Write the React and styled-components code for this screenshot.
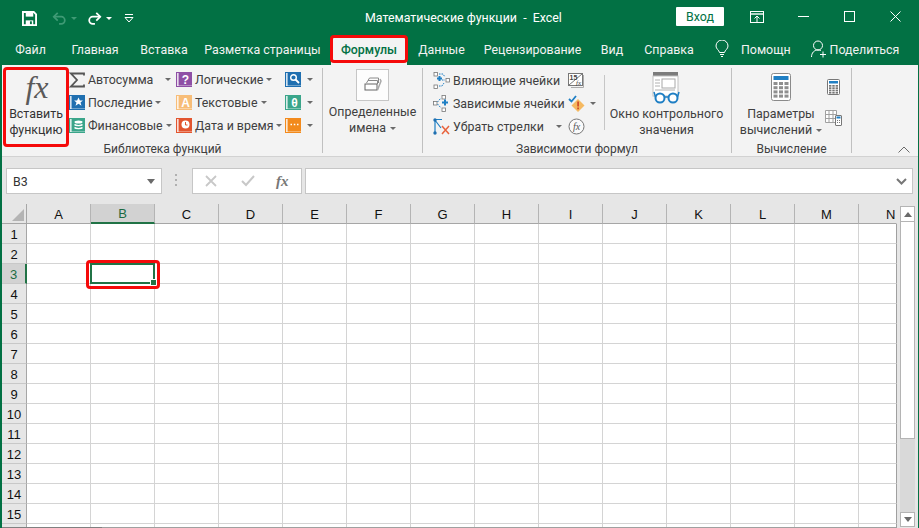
import React from 'react'
import styled, { createGlobalStyle } from 'styled-components'

const Global = createGlobalStyle`
  html, body { margin: 0; padding: 0; height: 100%; overflow: hidden; }
  body { font-family: Roboto, "Noto Sans", sans-serif; font-size: 12.4px; color: #404040; }
  svg { display: block; flex: none; }
`

const green = '#217346'
const dark = '#027144'

const Page = styled.div`
  width: 919px;
  height: 528px;
  display: flex;
  flex-direction: column;
  background: ${dark};
  overflow: hidden;
`
const TitleBar = styled.div`
  height: 36px;
  display: flex;
  align-items: center;
  color: #fff;
  flex: none;
`
const Qat = styled.div`
  width: 365px;
  padding-left: 22px;
  box-sizing: border-box;
  display: flex;
  align-items: center;
`
const QatGap = styled.span`
  width: 15px;
`
const Title = styled.div`
  width: 188px;
  margin-top: -2px;
  white-space: pre;
`
const Login = styled.div`
  margin-left: 123px;
  width: 48px;
  height: 19px;
  margin-top: -3px;
  background: #fff;
  color: ${dark};
  display: flex;
  align-items: center;
  justify-content: center;
  border-radius: 1px;
`
const WinButtons = styled.div`
  display: flex;
  align-items: center;
  margin-top: -3px;
  margin-left: 26px;
`
const WinButton = styled.div`
  width: ${p => p.$w}px;
  display: flex;
`
const TabRow = styled.div`
  height: 29px;
  display: flex;
  padding-left: 4px;
  flex: none;
`
const Tab = styled.div`
  position: relative;
  width: ${p => p.$w}px;
  margin-left: ${p => p.$ml || 0}px;
  display: flex;
  align-items: center;
  justify-content: center;
  padding-bottom: 3px;
  box-sizing: border-box;
  white-space: nowrap;
  color: ${p => (p.$active ? dark : '#f2f2f2')};
  background: ${p => (p.$active ? '#f3f3f3' : 'transparent')};
  font-weight: ${p => (p.$active ? 500 : 400)};
`
const RedBox = styled.div`
  position: absolute;
  left: ${p => p.$l}px;
  top: ${p => p.$t}px;
  width: ${p => p.$w}px;
  height: ${p => p.$h}px;
  box-sizing: border-box;
  border: 3px solid #f50a0a;
  border-radius: 4px;
  z-index: 5;
  pointer-events: none;
`
const Help = styled.div`
  display: flex;
  align-items: center;
  color: #f2f2f2;
  padding-bottom: 3px;
  margin-left: ${p => p.$ml}px;
  gap: ${p => p.$gap}px;
`
const Body = styled.div`
  flex: 1;
  margin: 0 1px 0 2px;
  display: flex;
  flex-direction: column;
  background: #e6e6e6;
  min-height: 0;
`
const Ribbon = styled.div`
  height: 92px;
  flex: none;
  display: flex;
  box-sizing: border-box;
  padding: 3px 0 0 1px;
  background: #f3f3f3;
  border-bottom: 1px solid #d2d2d2;
`
const Group = styled.div`
  width: ${p => p.$w}px;
  flex: none;
  height: 85px;
  display: flex;
  flex-direction: column;
  box-sizing: border-box;
  border-right: 1px solid #c0c0c0;
`
const GroupBody = styled.div`
  flex: 1;
  display: flex;
  min-height: 0;
  padding-left: ${p => p.$pl || 0}px;
`
const GroupLabel = styled.div`
  height: 11px;
  line-height: 14px;
  text-align: center;
  font-size: 12px;
  white-space: nowrap;
`
const FxButton = styled.div`
  position: relative;
  width: 66px;
  display: flex;
  flex-direction: column;
  align-items: center;
  line-height: 16px;
  text-align: center;
  color: #333;
`
const FxGlyph = styled.div`
  font-family: "Liberation Serif", serif;
  font-style: italic;
  font-size: 32px;
  line-height: 38px;
  height: 38px;
  padding-left: 2px;
  color: #5a5a5a;
`
const SmallCol = styled.div`
  width: ${p => p.$w}px;
  flex: none;
  padding-top: ${p => p.$pt || 0}px;
  display: flex;
  flex-direction: column;
  align-items: ${p => (p.$center ? 'center' : 'stretch')};
`
const SmallRow = styled.div`
  height: 23px;
  display: flex;
  align-items: center;
  white-space: nowrap;
  padding-left: ${p => p.$pl || 0}px;
`
const RowLabel = styled.span`
  margin-left: ${p => p.$ml ?? 3}px;
  margin-right: 3px;
`
const Caret = styled.span`
  width: 0;
  height: 0;
  flex: none;
  margin-left: ${p => p.$ml || 0}px;
  border-left: 3px solid transparent;
  border-right: 3px solid transparent;
  border-top: 3px solid #6a6a6a;
`
const BigCol = styled.div`
  width: ${p => p.$w}px;
  flex: none;
  display: flex;
  flex-direction: column;
  align-items: center;
  line-height: 16px;
  text-align: center;
  white-space: nowrap;
`
const IconSlot = styled.div`
  height: ${p => p.$h}px;
  flex: none;
  padding-top: ${p => p.$pt || 0}px;
  box-sizing: border-box;
  display: flex;
  justify-content: center;
`
const NamesBox = styled.div`
  width: 31px;
  height: 30px;
  margin-top: 1px;
  background: #fdfdfd;
  border: 1px solid #c6c6c6;
  display: flex;
  align-items: center;
  justify-content: center;
`
const InlineText = styled.div`
  display: flex;
  align-items: center;
  gap: 4px;
`
const Divider = styled.div`
  width: 1px;
  height: 55px;
  margin-top: 7px;
  background: #c6c6c6;
  flex: none;
`
const CalcGap = styled.div`
  height: 15px;
  flex: none;
`
const Collapse = styled.div`
  flex: 1;
  display: flex;
  justify-content: flex-end;
  align-items: flex-end;
  padding: 0 8px 3px 0;
`
const FormulaBar = styled.div`
  height: 47px;
  flex: none;
  display: flex;
  align-items: flex-start;
  padding: 11px 0 0 4px;
  box-sizing: border-box;
`
const Field = styled.div`
  height: 26px;
  box-sizing: border-box;
  background: #fff;
  border: 1px solid #c6c6c6;
  display: flex;
  align-items: center;
  width: ${p => p.$w}px;
  margin-left: ${p => p.$ml || 0}px;
  padding: 0 ${p => p.$pr || 0}px 0 ${p => p.$pl || 0}px;
  justify-content: ${p => p.$justify || 'flex-start'};
`
const NameText = styled.span`
  flex: 1;
  color: #333;
`
const FxSmall = styled.span`
  font-family: "Liberation Serif", serif;
  font-style: italic;
  font-weight: 700;
  font-size: 15px;
  color: #777;
  margin-left: 21px;
`
const Grip = styled.div`
  margin: 6px 0 0 13px;
  width: 2px;
  height: 12px;
  background: repeating-linear-gradient(#b0b0b0 0 2px, transparent 2px 5px);
`
const Content = styled.div`
  flex: 1;
  display: flex;
  min-height: 0;
`
const SheetWrap = styled.div`
  width: 895px;
  flex: none;
  display: flex;
  flex-direction: column;
`
const Sheet = styled.div`
  flex: 1;
  min-height: 0;
  overflow: hidden;
  display: grid;
  grid-template-columns: 25px repeat(13, 64px) 38px;
  grid-auto-rows: 20px;
  background: #fff;
`
const Corner = styled.div`
  background: #e6e6e6;
  border-right: 1px solid #a6a6a6;
  border-bottom: 1px solid #a6a6a6;
  box-sizing: border-box;
  display: flex;
  align-items: flex-end;
  justify-content: flex-end;
  padding: 0 2px 2px 0;
`
const ColHead = styled.div`
  box-sizing: border-box;
  background: ${p => (p.$sel ? '#d2d2d2' : '#e6e6e6')};
  color: ${p => (p.$sel ? '#1c6b42' : '#111')};
  border-right: 1px solid ${p => (p.$last ? '#e6e6e6' : '#b4b4b4')};
  border-bottom: ${p => (p.$sel ? `2px solid ${green}` : '1px solid #a6a6a6')};
  font-family: "Liberation Sans", sans-serif;
  font-size: 13px;
  padding: 1px 0 0 ${p => (p.$last ? 27 : 0)}px;
  display: flex;
  align-items: center;
  justify-content: ${p => (p.$last ? 'flex-start' : 'center')};
`
const RowHead = styled.div`
  box-sizing: border-box;
  background: ${p => (p.$sel ? '#d2d2d2' : '#e6e6e6')};
  color: ${p => (p.$sel ? '#1c6b42' : '#111')};
  border-right: ${p => (p.$sel ? `2px solid ${green}` : '1px solid #a6a6a6')};
  border-bottom: 1px solid #c8c8c8;
  font-family: "Liberation Sans", sans-serif;
  font-size: 13px;
  padding-top: 1px;
  display: flex;
  align-items: center;
  justify-content: center;
`
const Cell = styled.div`
  position: relative;
  box-sizing: border-box;
  border-right: 1px solid ${p => (p.$last ? '#a0a0a0' : '#d4d4d4')};
  border-bottom: 1px solid #d4d4d4;
`
const Selection = styled.div`
  position: absolute;
  left: -1px;
  top: -1px;
  width: 65px;
  height: 21px;
  box-sizing: border-box;
  border: 2px solid ${green};
  z-index: 3;
`
const Handle = styled.div`
  position: absolute;
  right: -4px;
  bottom: -4px;
  width: 5px;
  height: 5px;
  background: ${green};
  border: 1px solid #fff;
`
const HScroll = styled.div`
  height: 1px;
  flex: none;
  background: #a0a0a0;
`
const HScrollDark = styled.div`
  width: 100px;
  height: 1px;
  background: #808080;
`
const VScroll = styled.div`
  flex: 1;
  display: flex;
  flex-direction: column;
  padding: 2px 3px 1px 3px;
  background: #e6e6e6;
`
const ScrollBtn = styled.div`
  height: ${p => p.$h}px;
  flex: none;
  box-sizing: border-box;
  background: #fff;
  border: 1px solid #b4b4b4;
  display: flex;
  align-items: center;
  justify-content: center;
`
const Thumb = styled.div`
  height: 217px;
  flex: none;
  box-sizing: border-box;
  background: #fff;
  border: 1px solid #b4b4b4;
  border-top: none;
`
const Track = styled.div`
  flex: 1;
  background: #d9d9d9;
`

const Book = ({ color, children }) => (
  <svg width="16" height="17" viewBox="0 0 16 17">
    <rect x="0" y="1" width="16" height="15" fill={color} />
    <rect x="1.2" y="2" width="1.3" height="13" fill="#fff" />
    <rect x="1.2" y="14" width="14.8" height="1" fill="#fff" opacity="0.35" />
    {children}
  </svg>
)

const BookText = ({ children }) => (
  <text x="9.5" y="12.5" fontSize="12" fontWeight="700" textAnchor="middle" fill="#fff" fontFamily="Liberation Sans, sans-serif">
    {children}
  </text>
)

const Sigma = () => (
  <svg width="16" height="16" viewBox="0 0 16 16">
    <path d="M15 3.500V1.500H2L8 8 2 14.500h13v-2" fill="none" stroke="#555" strokeWidth="1.800" />
  </svg>
)

const SaveIcon = () => (
  <svg width="15" height="15" viewBox="0 0 16 16">
    <path d="M1 1h11.500L15 3.500V15H1z" fill="none" stroke="#fff" strokeWidth="2" />
    <rect x="4" y="1" width="8" height="5" fill="#fff" />
    <rect x="4" y="10" width="8" height="5" fill="#fff" />
    <rect x="8.500" y="11" width="2" height="3" fill={dark} />
  </svg>
)

const UndoIcon = ({ color, flip }) => (
  <svg width="15" height="13" viewBox="0 0 17 14" style={flip ? { transform: 'scaleX(-1)' } : undefined}>
    <path d="M2 5h8.500a4 4 0 0 1 0 8H8" fill="none" stroke={color} strokeWidth="2" />
    <path d="M6.500 .5 2 5l4.500 4.500" fill="none" stroke={color} strokeWidth="2" />
  </svg>
)

const QatCaret = styled.span`
  width: 0;
  height: 0;
  margin: 0 ${p => p.$mr}px 0 ${p => p.$ml}px;
  border-left: 3px solid transparent;
  border-right: 3px solid transparent;
  border-top: 3px solid ${p => p.$color};
`

const Customize = () => (
  <svg width="10" height="9" viewBox="0 0 10 9">
    <path d="M1 .5h8" stroke="#fff" />
    <path d="M1 3.500h8L5 8z" fill="none" stroke="#fff" />
  </svg>
)

const RibbonDisplay = () => (
  <svg width="14" height="12" viewBox="0 0 14 12">
    <rect x=".5" y=".5" width="13" height="11" fill="none" stroke="#fff" />
    <path d="M1 3h12" stroke="#fff" strokeWidth="1.400" />
    <path d="M7 11V5M4.500 7.500 7 5l2.500 2.500" fill="none" stroke="#fff" />
  </svg>
)

const Minimize = () => (
  <svg width="11" height="11" viewBox="0 0 11 11"><path d="M0 5.500h11" stroke="#fff" /></svg>
)
const Maximize = () => (
  <svg width="11" height="11" viewBox="0 0 11 11"><rect x=".5" y=".5" width="10" height="10" fill="none" stroke="#fff" /></svg>
)
const CloseIcon = () => (
  <svg width="11" height="11" viewBox="0 0 11 11"><path d="M.5.5l10 10M10.500.5l-10 10" stroke="#fff" /></svg>
)

const Bulb = () => (
  <svg width="14" height="18" viewBox="0 0 14 18">
    <path d="M4.500 12.500C4 10 1 9 1 6a6 6 0 0 1 12 0c0 3-3 4-3.500 6.500z" fill="none" stroke="#fff" />
    <path d="M5 14.500h4M6 16.500h2" stroke="#fff" />
  </svg>
)

const ShareUser = () => (
  <svg width="16" height="18" viewBox="0 0 16 18">
    <circle cx="7" cy="5.500" r="4.500" fill="none" stroke="#fff" />
    <path d="M.5 17c0-4 2.500-7 6.500-7 1 0 2 .2 2.800 .6" fill="none" stroke="#fff" />
    <path d="M12 11.500v6M9 14.500h6" stroke="#fff" />
  </svg>
)

const NamesIcon = () => (
  <svg width="18" height="18" viewBox="0 0 18 18">
    <path d="M4 4.500 5.500 2h9v5" fill="none" stroke="#8a8a8a" />
    <path d="M2.500 7 4 4.500h9.500V8" fill="none" stroke="#8a8a8a" />
    <rect x="1" y="8" width="12" height="6" fill="#fff" stroke="#666" />
    <path d="M13.500 14 17 5l-1-2" fill="none" stroke="#a9a9a9" strokeWidth="1.500" />
  </svg>
)

const Sq = ({ x, y }) => <rect x={x} y={y} width="3.500" height="3.500" fill="#fff" stroke="#777" strokeWidth=".8" />

const Precedents = () => (
  <svg width="17" height="17" viewBox="0 0 17 17">
    <Sq x="1" y=".5" /><Sq x="13" y="6.500" /><Sq x="1" y="13" />
    <path d="M4 6.500h5M6.500 4v5" stroke="#1f7fc4" strokeWidth="2" />
    <path d="M6 2h4l2 3M9 8h3" fill="none" stroke="#1f7fc4" strokeDasharray="1.500 1" />
    <path d="M6 14h3l2-3" fill="none" stroke="#1f7fc4" strokeDasharray="1.500 1" />
  </svg>
)

const Dependents = () => (
  <svg width="17" height="17" viewBox="0 0 17 17">
    <Sq x=".5" y="6.500" /><Sq x="9" y=".5" /><Sq x="9" y="13" />
    <path d="M9 7.500h6M12 4.500v6" stroke="#1f7fc4" strokeWidth="2" />
    <path d="M4.500 7 8 3M4.500 9 8 13" fill="none" stroke="#1f7fc4" strokeDasharray="1.500 1" />
  </svg>
)

const RemoveArrows = () => (
  <svg width="17" height="17" viewBox="0 0 17 17">
    <path d="M1.500 1.500 9 1.500M1.500 1.500 8 10M2 2v13" fill="none" stroke="#1f7fc4" strokeWidth="1.200" />
    <circle cx="2" cy="2" r="1.700" fill="#1f6fb0" />
    <circle cx="2" cy="15" r="1.700" fill="#1f6fb0" />
    <path d="M9 8l7 8M16 8l-7 8" stroke="#e8623c" strokeWidth="1.500" />
  </svg>
)

const ShowFormulas = () => (
  <svg width="17" height="17" viewBox="0 0 17 17">
    <rect x=".5" y="1.500" width="14" height="12" fill="#fff" stroke="#777" />
    <path d="M1 13 14 2" stroke="#777" />
    <text x="1.500" y="8" fontSize="7" fontWeight="700" fill="#444" fontFamily="Liberation Sans, sans-serif">15</text>
    <text x="8" y="13" fontSize="7" fontStyle="italic" fill="#444" fontFamily="Liberation Serif, serif">fx</text>
    <path d="M15.500 3v12.500H3" fill="none" stroke="#aaa" />
  </svg>
)

const ErrorCheck = () => (
  <svg width="17" height="17" viewBox="0 0 17 17">
    <path d="M1 4l2.500 2.500L8 1" fill="none" stroke="#1f7fc4" strokeWidth="1.800" />
    <path d="M10 4l6.500 6.500L10 17l-6.500-6.500z" fill="#f5b961" />
    <rect x="9.200" y="6.500" width="1.800" height="5" fill="#d2502a" />
    <rect x="9.200" y="12.500" width="1.800" height="1.800" fill="#d2502a" />
  </svg>
)

const Evaluate = () => (
  <svg width="17" height="17" viewBox="0 0 17 17">
    <circle cx="8.500" cy="8.500" r="7.500" fill="#fafafa" stroke="#777" />
    <text x="8.500" y="12" fontSize="10" fontStyle="italic" textAnchor="middle" fill="#555" fontFamily="Liberation Serif, serif">fx</text>
  </svg>
)

const WatchIcon = () => (
  <svg width="30" height="32" viewBox="0 0 30 32">
    <rect x="1" y="0" width="25" height="4" fill="#7b7b7b" />
    <rect x="1" y="4" width="25" height="20" fill="#fff" stroke="#c0c0c0" />
    <rect x="10" y="7" width="13" height="9" fill="#fff" stroke="#a8a8a8" />
    <path d="M3 8h5M3 11h5M3 14h5M3 18h20" stroke="#b0b0b0" />
    <circle cx="8" cy="26" r="4.500" fill="#fff" stroke="#1f7fc4" strokeWidth="2" />
    <circle cx="21" cy="26" r="4.500" fill="#fff" stroke="#1f7fc4" strokeWidth="2" />
    <path d="M12.500 25h4M3.500 25 2 20M25.500 25 27 20" fill="none" stroke="#1f7fc4" strokeWidth="1.500" />
  </svg>
)

const CalcKeys = ({ x, y, w, h, n, step, gap, fill }) => {
  const keys = []
  for (let r = 0; r < n; r++) {
    for (let c = 0; c < 3; c++) {
      keys.push(<rect key={`${r}-${c}`} x={x + c * step} y={y + r * gap} width={w} height={h} fill={fill} />)
    }
  }
  return keys
}

const CalcBig = () => (
  <svg width="20" height="28" viewBox="0 0 20 28">
    <rect x=".5" y=".5" width="19" height="27" rx="2" fill="#fff" stroke="#8a8a8a" />
    <rect x="2.500" y="3" width="15" height="4" fill="#1f7fc4" />
    <CalcKeys x={2.5} y={9} w={4} h={3} n={4} step={5.5} gap={4.2} fill="#8f8f8f" />
  </svg>
)

const CalcSmall = () => (
  <svg width="13" height="16" viewBox="0 0 13 16">
    <rect x=".5" y=".5" width="12" height="15" rx="1" fill="#fff" stroke="#777" />
    <rect x="2" y="2" width="9" height="2.500" fill="#1f7fc4" />
    <CalcKeys x={2} y={6} w={2.4} h={1.7} n={4} step={3.3} gap={2.3} fill="#777" />
  </svg>
)

const CalcSheet = () => (
  <svg width="17" height="16" viewBox="0 0 17 16">
    <path d="M.5 .5h11v12H.5zM.5 4.500h11M.5 8.500h11M4 .5v12M8 .5v12" fill="#fff" stroke="#a0a0a0" />
    <rect x="10.500" y="5.500" width="6" height="10" rx=".5" fill="#fff" stroke="#777" />
    <rect x="11.500" y="6.500" width="4" height="2" fill="#1f7fc4" />
    <path d="M12 10.500h1M14 10.500h1M12 12.500h1M14 12.500h1" stroke="#777" />
  </svg>
)

const Chevron = () => (
  <svg width="12" height="7" viewBox="0 0 12 7">
    <path d="M.5 6.500 6 1l5.500 5.500" fill="none" stroke="#6a6a6a" />
  </svg>
)

const XMark = () => (
  <svg width="12" height="12" viewBox="0 0 12 12"><path d="M1 1l10 10M11 1 1 11" stroke="#c8c8c8" strokeWidth="1.800" /></svg>
)
const Check = () => (
  <svg width="14" height="12" viewBox="0 0 14 12" style={{ marginLeft: 24 }}><path d="M1 6l4 4 8-9" fill="none" stroke="#c8c8c8" strokeWidth="2" /></svg>
)
const DownChevron = () => (
  <svg width="11" height="7" viewBox="0 0 11 7"><path d="M1 1l4.500 4.500L10 1" fill="none" stroke="#777" strokeWidth="2" /></svg>
)
const CornerMark = () => (
  <svg width="12" height="12" viewBox="0 0 12 12"><path d="M12 0v12H0z" fill="#b4b4b4" /></svg>
)
const ScrollArrow = ({ down }) => (
  <svg width="8" height="5" viewBox="0 0 8 5">
    <path d={down ? 'M0 0h8L4 5z' : 'M0 5h8L4 0z'} fill="#6a6a6a" />
  </svg>
)

const tabs = [
  ['Файл', 53], ['Главная', 76], ['Вставка', 62], ['Разметка страницы', 135],
]
const tabsAfter = [
  ['Данные', 69], ['Рецензирование', 113], ['Вид', 46], ['Справка', 68],
]

const libCol1 = [
  { label: 'Автосумма', icon: <Sigma />, gap: 9 },
  { label: 'Последние', icon: <Book color="#1f6fb0"><path d="M9.500 3.500l1.400 3h3l-2.400 2 1 3.200-3-1.900-3 1.900 1-3.200-2.400-2h3z" fill="#fff" /></Book> },
  { label: 'Финансовые', icon: <Book color="#3aa58a"><ellipse cx="9.500" cy="5" rx="4" ry="1.500" fill="#fff" /><path d="M5.500 7.500c1 1.500 7 1.500 8 0M5.500 10.500c1 1.500 7 1.500 8 0" stroke="#fff" strokeWidth="1.400" fill="none" /></Book> },
]
const libCol2 = [
  { label: 'Логические', icon: <Book color="#8e4fa5"><BookText>?</BookText></Book> },
  { label: 'Текстовые', icon: <Book color="#f7bd78"><BookText>A</BookText></Book> },
  { label: 'Дата и время', icon: <Book color="#e2552f"><circle cx="9.500" cy="7.500" r="4" fill="#fff" /><path d="M9.500 5v3h2" stroke="#e2552f" fill="none" /></Book> },
]
const libCol3 = [
  <Book color="#1f6fb0"><circle cx="8.500" cy="6.500" r="2.800" fill="none" stroke="#fff" strokeWidth="1.400" /><path d="M10.500 8.500l3.500 3.500" stroke="#fff" strokeWidth="1.800" /></Book>,
  <Book color="#3aa58a"><BookText>θ</BookText></Book>,
  <Book color="#f28a1c"><path d="M5.500 7.500h1.500M8.800 7.500h1.500M12 7.500h1.500" stroke="#fff" strokeWidth="1.500" /></Book>,
]

const columns = 'ABCDEFGHIJKLMN'.split('')
const rows = Array.from({ length: 16 }, (_, i) => i + 1)

export default function App() {
  return (
    <Page>
      <Global />
      <TitleBar>
        <Qat>
          <SaveIcon />
          <QatGap />
          <UndoIcon color="#3f9a75" />
          <QatCaret $ml={4} $mr={10} $color="#3f9a75" />
          <UndoIcon color="#fff" flip />
          <QatCaret $ml={4} $mr={12} $color="#fff" />
          <Customize />
        </Qat>
        <Title>Математические функции  -  Excel</Title>
        <Login>Вход</Login>
        <WinButtons>
          <WinButton $w={48}><RibbonDisplay /></WinButton>
          <WinButton $w={46}><Minimize /></WinButton>
          <WinButton $w={46}><Maximize /></WinButton>
          <WinButton $w={12}><CloseIcon /></WinButton>
        </WinButtons>
      </TitleBar>

      <TabRow>
        {tabs.map(([name, w]) => <Tab key={name} $w={w}>{name}</Tab>)}
        <Tab $w={76} $ml={1} $active>
          Формулы
          <RedBox $l={-1} $t={-1} $w={78} $h={28} />
        </Tab>
        {tabsAfter.map(([name, w]) => <Tab key={name} $w={w}>{name}</Tab>)}
        <Help $ml={12} $gap={12}><Bulb />Помощн</Help>
        <Help $ml={20} $gap={3}><ShareUser />Поделиться</Help>
      </TabRow>

      <Body>
        <Ribbon>
          <Group $w={320}>
            <GroupBody>
              <FxButton>
                <RedBox $l={0} $t={-1} $w={66} $h={80} />
                <FxGlyph>fx</FxGlyph>
                <div>Вставить</div>
                <div>функцию</div>
              </FxButton>
              <SmallCol $w={107}>
                {libCol1.map(r => (
                  <SmallRow key={r.label}>
                    {r.icon}
                    <RowLabel>{r.label}</RowLabel>
                    <Caret $ml={r.gap || 0} />
                  </SmallRow>
                ))}
              </SmallCol>
              <SmallCol $w={109}>
                {libCol2.map(r => (
                  <SmallRow key={r.label}>
                    {r.icon}
                    <RowLabel>{r.label}</RowLabel>
                    <Caret />
                  </SmallRow>
                ))}
              </SmallCol>
              <SmallCol $w={36}>
                {libCol3.map((icon, i) => (
                  <SmallRow key={i}>
                    {icon}
                    <Caret $ml={6} />
                  </SmallRow>
                ))}
              </SmallCol>
            </GroupBody>
            <GroupLabel>Библиотека функций</GroupLabel>
          </Group>

          <Group $w={100}>
            <GroupBody>
              <BigCol $w={99}>
                <IconSlot $h={36}>
                  <NamesBox><NamesIcon /></NamesBox>
                </IconSlot>
                <div>Определенные</div>
                <InlineText>имена <Caret /></InlineText>
              </BigCol>
            </GroupBody>
          </Group>

          <Group $w={309}>
            <GroupBody>
              <SmallCol $w={145} $pt={1}>
                {[
                  ['Влияющие ячейки', <Precedents />],
                  ['Зависимые ячейки', <Dependents />],
                  ['Убрать стрелки', <RemoveArrows />],
                ].map(([label, icon], i) => (
                  <SmallRow key={label} $pl={10}>
                    {icon}
                    <RowLabel>{label}</RowLabel>
                    {i === 2 && <Caret $ml={9} />}
                  </SmallRow>
                ))}
              </SmallCol>
              <SmallCol $w={36} $pt={1}>
                <SmallRow><ShowFormulas /></SmallRow>
                <SmallRow><ErrorCheck /><Caret $ml={5} /></SmallRow>
                <SmallRow><Evaluate /></SmallRow>
              </SmallCol>
              <Divider />
              <BigCol $w={123}>
                <IconSlot $h={38} $pt={4}><WatchIcon /></IconSlot>
                <div>Окно контрольного</div>
                <div>значения</div>
              </BigCol>
            </GroupBody>
            <GroupLabel>Зависимости формул</GroupLabel>
          </Group>

          <Group $w={120}>
            <GroupBody $pl={5}>
              <BigCol $w={88}>
                <IconSlot $h={38} $pt={5}><CalcBig /></IconSlot>
                <div>Параметры</div>
                <InlineText>вычислений <Caret /></InlineText>
              </BigCol>
              <SmallCol $w={17} $pt={11} $center>
                <CalcSmall />
                <CalcGap />
                <CalcSheet />
              </SmallCol>
            </GroupBody>
            <GroupLabel>Вычисление</GroupLabel>
          </Group>

          <Collapse><Chevron /></Collapse>
        </Ribbon>

        <FormulaBar>
          <Field $w={156} $pl={6} $pr={6}>
            <NameText>B3</NameText>
            <ScrollArrow down />
          </Field>
          <Grip />
          <Field $w={110} $ml={15} $pl={12}>
            <XMark /><Check /><FxSmall>fx</FxSmall>
          </Field>
          <Field $w={608} $ml={3} $pr={5} $justify="flex-end">
            <DownChevron />
          </Field>
        </FormulaBar>

        <Content>
          <SheetWrap>
            <Sheet>
              <Corner><CornerMark /></Corner>
              {columns.map((c, i) => (
                <ColHead key={c} $sel={c === 'B'} $last={i === columns.length - 1}>{c}</ColHead>
              ))}
              {rows.map(r => (
                <React.Fragment key={r}>
                  <RowHead $sel={r === 3}>{r < 16 ? r : ''}</RowHead>
                  {columns.map((c, i) => (
                    <Cell key={c} $last={i === columns.length - 1}>
                      {r === 3 && c === 'B' && (
                        <>
                          <Selection><Handle /></Selection>
                          <RedBox $l={-5} $t={-4} $w={74} $h={29} />
                        </>
                      )}
                    </Cell>
                  ))}
                </React.Fragment>
              ))}
            </Sheet>
            <HScroll><HScrollDark /></HScroll>
          </SheetWrap>
          <VScroll>
            <ScrollBtn $h={16}><ScrollArrow /></ScrollBtn>
            <Thumb />
            <Track />
            <ScrollBtn $h={15}><ScrollArrow down /></ScrollBtn>
          </VScroll>
        </Content>
      </Body>
    </Page>
  )
}
